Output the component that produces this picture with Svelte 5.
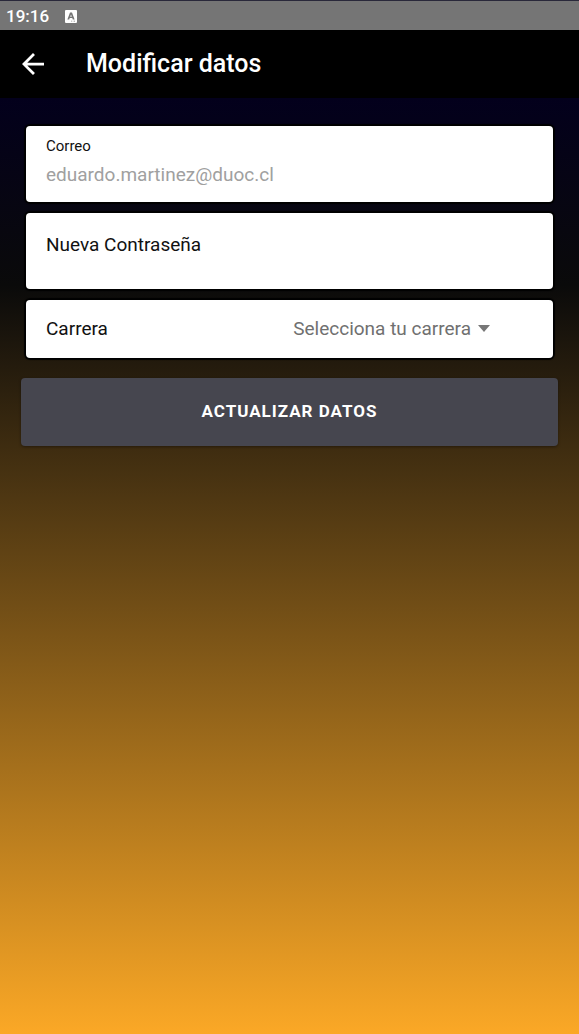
<script>
  let password = $state('');
  let career = $state('');
  const careers = ['Ingeniería', 'Diseño', 'Salud'];
</script>

<div class="screen">
  <div class="status">
    <time>19:16</time>
    <svg class="notice" viewBox="0 0 12 13" aria-hidden="true">
      <path fill="#fff" fill-rule="evenodd" d="M1 0H11Q12 0 12 1V12Q12 13 11 13H1Q0 13 0 12V1Q0 0 1 0ZM5 2.5L2.4 9.5H4.2L4.7 8H7.3L7.8 9.5H9.6L7 2.5ZM6 4.4L6.8 6.7H5.2ZM6.2 10.8V11.6H7.2V10.8ZM8.6 10.8V11.6H10V10.8Z" />
    </svg>
  </div>

  <header>
    <button class="back" type="button" aria-label="Volver">
      <svg viewBox="4 4 16 16" aria-hidden="true">
        <path fill="#fff" d="M20 11H7.83l5.59-5.59L12 4l-8 8 8 8 1.41-1.41L7.83 13H20v-2z" />
      </svg>
    </button>
    <h1>Modificar datos</h1>
  </header>

  <main>
    <form onsubmit={(event) => event.preventDefault()}>
      <div class="fields">
        <div class="field stacked">
          <label class="small" for="email">Correo</label>
          <input id="email" type="email" value="eduardo.martinez@duoc.cl" disabled />
        </div>
        <div class="field floating" class:filled={password}>
          <label for="password">Nueva Contraseña</label>
          <input id="password" type="password" bind:value={password} />
        </div>
        <div class="field choice">
          <label for="career">Carrera</label>
          <div class="picker">
            <select id="career" bind:value={career}>
              <option value="" disabled>Selecciona tu carrera</option>
              {#each careers as name}
                <option value={name}>{name}</option>
              {/each}
            </select>
            <svg viewBox="0 0 12 8" aria-hidden="true"><path fill="#777" d="M0 0H12L6 7Z" /></svg>
          </div>
        </div>
      </div>
      <button class="submit" type="submit">Actualizar datos</button>
    </form>
  </main>
</div>

<style>
  :global(body) {
    margin: 0;
    background: #000;
  }

  .screen {
    display: flex;
    flex-direction: column;
    min-height: 100vh;
    font-family: Roboto, sans-serif;
    color: #111;
  }

  .status {
    display: flex;
    align-items: center;
    gap: 16px;
    box-sizing: border-box;
    height: 30px;
    padding: 1px 6px 0;
    border-top: 1px solid #29283a;
    background: #757575;
    color: #fff;
    font-size: 17px;
    font-weight: 500;
  }

  .notice {
    width: 12px;
    height: 13px;
  }

  header {
    display: flex;
    align-items: center;
    gap: 42px;
    height: 68px;
    padding: 0 22px;
    background: #000;
    color: #fff;
  }

  .back {
    display: flex;
    padding: 0;
    border: 0;
    background: none;
  }

  .back svg {
    width: 22px;
    height: 22px;
  }

  h1 {
    margin: 0;
    font-size: 25px;
    font-weight: 500;
    line-height: 32px;
  }

  main {
    flex: 1;
    padding: 28px 21px;
    background: linear-gradient(#03001c, #0a0a0a 20%, #fba826);
  }

  .fields {
    display: flex;
    flex-direction: column;
    gap: 11px;
    padding: 0 5px;
  }

  .field {
    display: flex;
    flex-direction: column;
    box-sizing: border-box;
    padding: 0 20px;
    border-radius: 4px;
    background: #fff;
    box-shadow: 0 0 1px 2px #000;
    font-size: 19px;
    line-height: 24px;
  }

  .stacked,
  .floating {
    height: 76px;
  }

  .stacked {
    gap: 7px;
    padding-top: 10px;
  }

  .small {
    font-size: 15px;
    line-height: 20px;
  }

  input,
  select {
    padding: 0;
    border: 0;
    outline: 0;
    background: none;
    font: inherit;
  }

  input:disabled {
    color: #a0a0a0;
    opacity: 1;
  }

  .floating {
    padding-top: 20px;
  }

  .floating.filled {
    padding-top: 10px;
  }

  .choice {
    flex-direction: row;
    align-items: center;
    justify-content: space-between;
    height: 58px;
    padding-right: 63px;
  }

  .picker {
    display: flex;
    align-items: center;
    gap: 7px;
  }

  select {
    appearance: none;
    field-sizing: content;
    color: #707070;
  }

  .picker svg {
    width: 12px;
    height: 8px;
  }

  .submit {
    width: 100%;
    height: 68px;
    margin-top: 20px;
    padding: 0 0 2px;
    border: 0;
    border-radius: 4px;
    background: #46464f;
    box-shadow: 0 1px 3px rgb(0 0 0 / 40%);
    color: #fff;
    font-family: inherit;
    font-size: 17px;
    font-weight: 700;
    letter-spacing: 1px;
    text-transform: uppercase;
  }
</style>
